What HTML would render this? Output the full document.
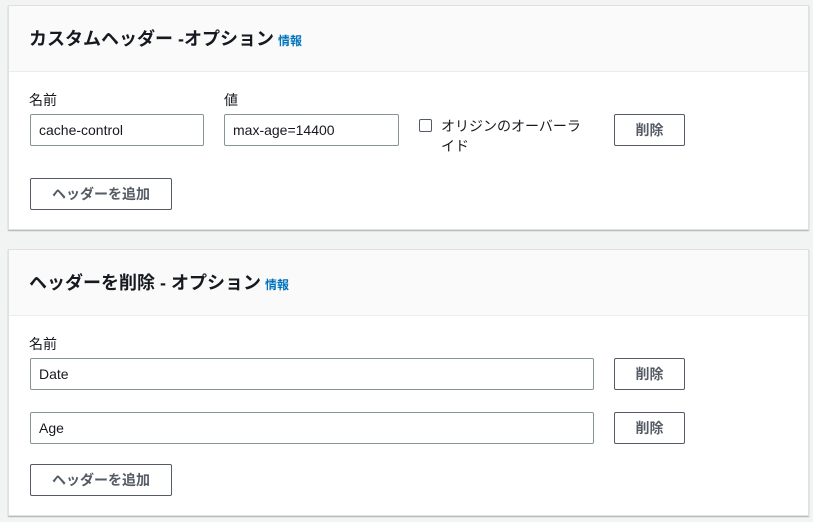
<!DOCTYPE html>
<html><head><meta charset="utf-8"><style>
*{box-sizing:border-box;margin:0;padding:0}
body{width:813px;height:522px;background:#f2f3f3;font-family:"Liberation Sans","Noto Sans CJK JP",sans-serif;color:#16191f;position:relative;overflow:hidden}
.card{position:absolute;left:8px;width:801px;background:#fff;border:1px solid #e0e0e0;box-shadow:0 1px 1px rgba(0,28,36,.3)}
.hd{position:absolute;left:0;right:0;top:0;background:#fafafa;border-bottom:1px solid #eaeded}
.t{position:absolute;left:20px;font-size:18px;font-weight:bold;white-space:nowrap}
.t span{font-size:12px;color:#0073bb;font-weight:bold;margin-left:4px}
.a{position:absolute;white-space:nowrap}
.lbl{font-size:14px}
.in{border:1px solid #879596;border-radius:2px;height:32px;font-size:14px;padding:6px 8px;line-height:18px}
.btn{border:1px solid #545b64;border-radius:2px;height:32px;font-size:14px;font-weight:bold;color:#545b64;text-align:center;line-height:30px}
</style></head><body>
<div class="card" style="top:5px;height:225px">
 <div class="hd" style="height:66px"></div>
 <div class="t" style="top:19px">カスタムヘッダー -オプション<span>情報</span></div>
 <div class="a lbl" style="left:20px;top:84px">名前</div>
 <div class="a lbl" style="left:215px;top:84px">値</div>
 <div class="a in" style="left:21px;top:108px;width:174px">cache-control</div>
 <div class="a in" style="left:215px;top:108px;width:175px">max-age=14400</div>
 <div class="a" style="left:410px;top:113px;width:13px;height:13px;border:1px solid #545b64;border-radius:2px"></div>
 <div class="a" style="left:432px;top:110px;font-size:14px;line-height:20px;color:#16191f">オリジンのオーバーラ<br>イド</div>
 <div class="a btn" style="left:605px;top:108px;width:71px">削除</div>
 <div class="a btn" style="left:21px;top:172px;width:142px">ヘッダーを追加</div>
</div>
<div class="card" style="top:249px;height:267px">
 <div class="hd" style="height:66px"></div>
 <div class="t" style="top:19px">ヘッダーを削除 - オプション<span>情報</span></div>
 <div class="a lbl" style="left:20px;top:84px">名前</div>
 <div class="a in" style="left:21px;top:108px;width:564px">Date</div>
 <div class="a btn" style="left:605px;top:108px;width:71px">削除</div>
 <div class="a in" style="left:21px;top:162px;width:564px">Age</div>
 <div class="a btn" style="left:605px;top:162px;width:71px">削除</div>
 <div class="a btn" style="left:21px;top:214px;width:142px">ヘッダーを追加</div>
</div>
</body></html>
